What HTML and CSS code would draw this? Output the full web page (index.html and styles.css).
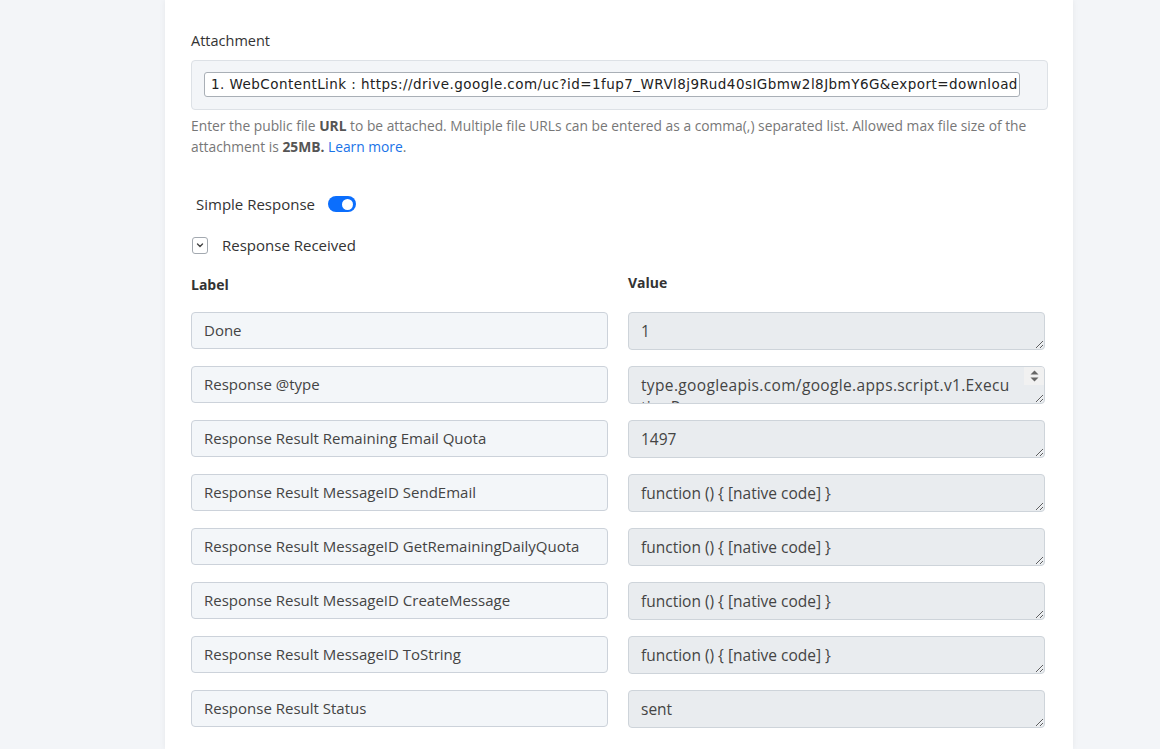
FILE: index.html
```html
<!DOCTYPE html>
<html lang="en">
<head>
    <meta charset="UTF-8">
    <title>Response Received</title>
    <link rel="stylesheet" href="styles.css">
</head>
<body>
    <div class="card">
        <div class="field">
            <label class="field-label">Attachment</label>
            <div class="attach-box">
                <div class="attach-input">1. WebContentLink : https://drive.google.com/uc?id=1fup7_WRVl8j9Rud40sIGbmw2l8JbmY6G&amp;export=download</div>
            </div>
            <p class="help">Enter the public file <b>URL</b> to be attached. Multiple file URLs can be entered as a comma(,) separated list. Allowed max file size of the attachment is <b>25MB.</b> <a href="#">Learn more</a>.</p>
        </div>

        <div class="switch-row">
            <span>Simple Response</span>
            <span class="toggle"><span class="knob"></span></span>
        </div>

        <div class="collapse-row">
            <span class="chevron">
                <svg width="10" height="10" viewBox="0 0 10 10"><path d="M2.5 4 L5 6.5 L7.5 4" fill="none" stroke="#444" stroke-width="1.4" stroke-linecap="round" stroke-linejoin="round"/></svg>
            </span>
            <span>Response Received</span>
        </div>

        <div class="grid">
            <div class="col-head">Label</div>
            <div class="col-head value-head">Value</div>

            <div class="label-box">Done</div>
            <textarea class="value-box" readonly>1</textarea>

            <div class="label-box">Response @type</div>
            <div class="value-wrap">
                <textarea class="value-box long" readonly>type.googleapis.com/google.apps.script.v1.ExecutionResponse</textarea>
                <div class="fake-scroll">
                    <svg width="9" height="5" viewBox="0 0 9 5"><path d="M0.5 4.5 L4.5 0.5 L8.5 4.5 Z" fill="#666"/></svg>
                    <svg width="9" height="5" viewBox="0 0 9 5"><path d="M0.5 0.5 L4.5 4.5 L8.5 0.5 Z" fill="#666"/></svg>
                </div>
            </div>

            <div class="label-box">Response Result Remaining Email Quota</div>
            <textarea class="value-box" readonly>1497</textarea>

            <div class="label-box">Response Result MessageID SendEmail</div>
            <textarea class="value-box" readonly>function () { [native code] }</textarea>

            <div class="label-box">Response Result MessageID GetRemainingDailyQuota</div>
            <textarea class="value-box" readonly>function () { [native code] }</textarea>

            <div class="label-box">Response Result MessageID CreateMessage</div>
            <textarea class="value-box" readonly>function () { [native code] }</textarea>

            <div class="label-box">Response Result MessageID ToString</div>
            <textarea class="value-box" readonly>function () { [native code] }</textarea>

            <div class="label-box">Response Result Status</div>
            <textarea class="value-box" readonly>sent</textarea>
        </div>
    </div>
</body>
</html>
```

FILE: styles.css
```css
* {
    margin: 0;
    padding: 0;
    box-sizing: border-box;
}

body {
    font-family: 'Open Sans', 'Liberation Sans', sans-serif;
    color: #333;
    background-color: #f3f5f8;
    height: 749px;
    overflow: hidden;
}

/* Card */
.card {
    width: 908px;
    margin-left: 165px;
    min-height: 100vh;
    background: #fff;
    padding: 31px 25px 0 26px;
    box-shadow: 0 0 6px rgba(0, 0, 0, 0.06);
}

/* Attachment */
.field-label {
    display: block;
    font-size: 14.5px;
    line-height: 20px;
    color: #333;
}

.attach-box {
    margin-top: 9px;
    height: 50px;
    background: #f3f5f8;
    border: 1px solid #dde1e6;
    border-radius: 4px;
    padding: 11px 12px;
}

.attach-input {
    width: 816px;
    height: 25px;
    background: #fff;
    border: 1px solid #a9afb6;
    border-radius: 3px;
    padding: 0 6px;
    font-family: 'DejaVu Sans', Verdana, sans-serif;
    font-size: 13.5px;
    letter-spacing: 0.45px;
    line-height: 23px;
    color: #222;
    white-space: nowrap;
    overflow: hidden;
}

.help {
    margin-top: 5px;
    font-size: 13.8px;
    line-height: 21px;
    color: #777;
}

.help b {
    color: #555;
}

.help a {
    color: #1a73e8;
    text-decoration: none;
}

/* Simple response toggle */
.switch-row {
    display: flex;
    align-items: center;
    gap: 13px;
    margin-top: 37px;
    padding-left: 5px;
    font-size: 15px;
    line-height: 20px;
}

.toggle {
    position: relative;
    width: 28px;
    height: 16px;
    border-radius: 8px;
    background: #0b6efd;
}

.toggle .knob {
    position: absolute;
    top: 2.5px;
    right: 3px;
    width: 11px;
    height: 11px;
    border-radius: 50%;
    background: #fff;
}

/* Response received */
.collapse-row {
    display: flex;
    align-items: center;
    gap: 14px;
    margin-top: 21px;
    padding-left: 1px;
    font-size: 15px;
    line-height: 20px;
}

.chevron {
    display: flex;
    align-items: center;
    justify-content: center;
    width: 16px;
    height: 17px;
    border: 1px solid #a3a9b0;
    border-radius: 3px;
}

/* Label / value grid */
.grid {
    display: grid;
    grid-template-columns: 417px 417px;
    column-gap: 20px;
    row-gap: 16px;
    margin-top: 20px;
}

.col-head {
    font-size: 14px;
    font-weight: bold;
    line-height: 20px;
    color: #333;
    margin-bottom: 1px;
}

.value-head {
    margin-top: -2px;
}

.label-box {
    height: 37px;
    background: #f3f6f9;
    border: 1px solid #ccd2da;
    border-radius: 4px;
    padding: 0 12px;
    font-size: 15px;
    line-height: 35px;
    color: #444;
    white-space: nowrap;
}

.value-box {
    display: block;
    width: 417px;
    height: 38px;
    background: #e9ecef;
    border: 1px solid #ced4da;
    border-radius: 4px;
    padding: 7px 12px;
    font-family: 'Open Sans', 'Liberation Sans', sans-serif;
    font-size: 15.5px;
    line-height: 22px;
    color: #444;
    resize: vertical;
    outline: none;
}

/* value that overflows and scrolls */
.value-wrap {
    position: relative;
}

.value-box.long {
    padding-right: 30px;
    letter-spacing: 0.35px;
    word-break: break-all;
    overflow: hidden;
}

.fake-scroll {
    position: absolute;
    top: 1px;
    right: 1px;
    width: 20px;
    height: 18px;
    background: #f1f1f1;
    border-top-right-radius: 3px;
    display: flex;
    flex-direction: column;
    align-items: center;
    justify-content: center;
    gap: 2px;
}
```
